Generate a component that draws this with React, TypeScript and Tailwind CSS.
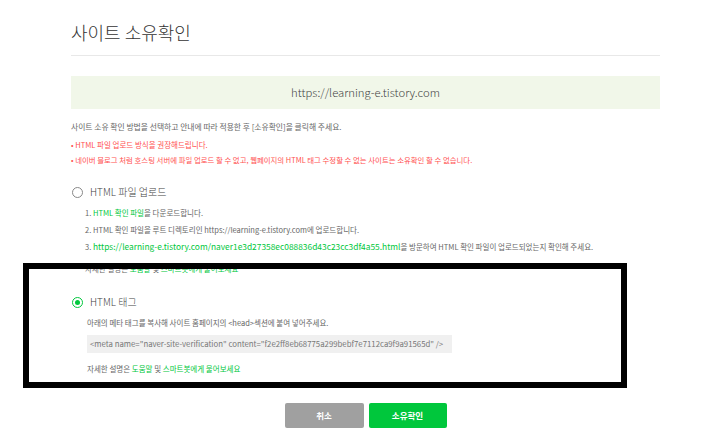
const font = { fontFamily: '"Noto Sans CJK KR", "Noto Sans", sans-serif' };

function Radio({ checked, label }: { checked?: boolean; label: string }) {
  return (
    <div className="flex h-[14px] items-center">
      <span
        className={
          checked
            ? "ml-[1px] flex h-[11px] w-[11px] items-center justify-center rounded-full border-[1.5px] border-[#00c73c]"
            : "ml-[1px] h-[11px] w-[11px] rounded-full border border-[#888]"
        }
      >
        {checked && <span className="h-[5px] w-[5px] rounded-full bg-[#00c73c]" />}
      </span>
      <span className="ml-[7px] text-[10px] leading-[14px] font-light text-[#444]">{label}</span>
    </div>
  );
}

function MoreHelp({ className }: { className?: string }) {
  return (
    <p className={"pl-[16px] text-[7.5px] leading-[10px] text-[#666] " + (className ?? "")}>
      자세한 설명은 <span className="text-[#00c73c]">도움말</span> 및{" "}
      <span className="text-[#00c73c]">스마트봇에게 물어보세요</span>
    </p>
  );
}

export default function App() {
  return (
    <div className="relative h-[442px] w-[726px] overflow-hidden bg-white" style={font}>
      <div className="ml-[71px] w-[589px]">
        <div className="h-[56px] border-b border-[#e8e8e8] pt-[21px]">
          <h1 className="text-[18px] leading-[22px] font-light text-[#333]">사이트 소유확인</h1>
        </div>

        <div className="mt-[20px] flex h-[33px] items-center justify-center bg-[#f1f7e9] text-[11.3px] font-light text-[#444]">
          https://learning-e.tistory.com
        </div>

        <p className="mt-[13px] text-[7.8px] leading-[10px] text-[#666]">
          사이트 소유 확인 방법을 선택하고 안내에 따라 적용한 후 [소유확인]을 클릭해 주세요.
        </p>
        <p className="mt-[8px] text-[7.5px] leading-[10px] text-[#ff5050]">
          • HTML 파일 업로드 방식을 권장해드립니다.
        </p>
        <p className="mt-[5px] text-[7.4px] leading-[10px] text-[#ff5050]">
          • 네이버 블로그 처럼 호스팅 서버에 파일 업로드 할 수 없고, 웹페이지의 HTML 태그 수정할 수 없는 사이트는 소유확인 할 수 없습니다.
        </p>

        <div className="mt-[20px]">
          <Radio label="HTML 파일 업로드" />
          <ol className="pl-[14px] text-[7.5px] leading-[10px] text-[#666]">
            <li className="mt-[9px]">
              1. <span className="text-[#00c73c]">HTML 확인 파일</span>을 다운로드합니다.
            </li>
            <li className="mt-[7px]">
              2. HTML 확인 파일을 루트 디렉토리인 https://learning-e.tistory.com에 업로드합니다.
            </li>
            <li className="mt-[6px]">
              3.{" "}
              <span className="text-[8.4px] text-[#00c73c]">
                https://learning-e.tistory.com/naver1e3d27358ec088836d43c23cc3df4a55.html
              </span>
              을 방문하여 HTML 확인 파일이 업로드되었는지 확인해 주세요.
            </li>
          </ol>
          <MoreHelp className="mt-[12px] !pl-[14px]" />
        </div>

        <div className="mt-[21px]">
          <Radio checked label="HTML 태그" />
          <p className="mt-[9px] pl-[16px] text-[7.5px] leading-[10px] text-[#666]">
            아래의 메타 태그를 복사해 사이트 홈페이지의 {"<head>"}섹션에 붙여 넣어주세요.
          </p>
          <div className="mt-[7px] ml-[16px] flex h-[18px] w-[365px] items-center bg-[#f0f0f0] pl-[3px] text-[7.8px] whitespace-nowrap text-[#777]">
            {'<meta name="naver-site-verification" content="f2e2ff8eb68775a299bebf7e7112ca9f9a91565d" />'}
          </div>
          <MoreHelp className="mt-[11px]" />
        </div>

        <div className="mt-[29px] flex justify-center gap-[5px]">
          <button className="h-[25px] w-[79px] rounded-[2px] bg-[#a0a0a0] text-[8.5px] font-bold text-white">
            취소
          </button>
          <button className="h-[25px] w-[78px] rounded-[2px] bg-[#00c73c] text-[8.5px] font-bold text-white">
            소유확인
          </button>
        </div>
      </div>

      <div className="pointer-events-none absolute top-[263px] left-[23px] h-[125px] w-[604px] border-[6px] border-black" />
    </div>
  );
}
